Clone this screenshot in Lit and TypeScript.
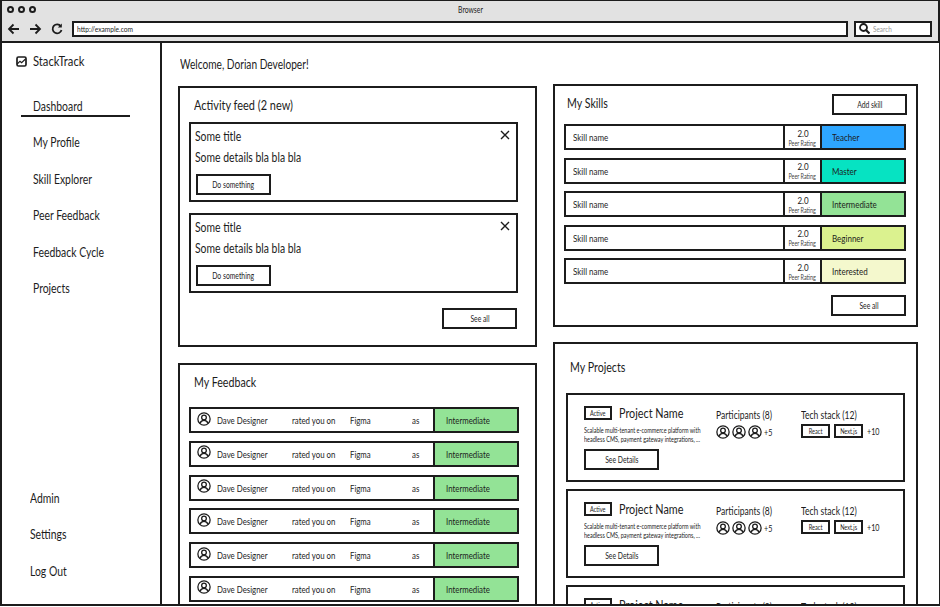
import { LitElement, html, css } from "lit";
import { customElement } from "lit/decorators.js";

const avatar = (s: number) => html`<svg class="ic" width=${s} height=${s} viewBox="0 0 24 24" fill="none" stroke="#1c1c1c" stroke-width="2.2"><circle cx="12" cy="12" r="10.5"/><circle cx="12" cy="9.5" r="4"/><path d="M5 19.5c1.5-3.5 4-5 7-5s5.5 1.5 7 5"/></svg>`;
const close = html`<svg class="ic" width="10" height="10" viewBox="0 0 10 10" stroke="#1c1c1c" stroke-width="1.4" fill="none"><path d="M1 1l8 8M9 1l-8 8"/></svg>`;
const t = (s: string) => html`<span class="sx">${s}</span>`;

const skills = [
  ["Teacher", "#2ea6ff"],
  ["Master", "#06e3c2"],
  ["Intermediate", "#93e396"],
  ["Beginner", "#dbf28f"],
  ["Interested", "#f4f8cd"],
];

@customElement("app-root")
export class AppRoot extends LitElement {
  static styles = css`
    :host { display: block; width: 940px; height: 607px; overflow: hidden; background: #fff; color: #1c1c1c; font-family: Lato, "Liberation Sans", sans-serif; }
    * { box-sizing: border-box; }
    .sx { display: inline-block; transform: scaleX(.8); transform-origin: left center; white-space: nowrap; }
    .btn .sx, .tag .sx, .btitle .sx, .rt .sx { transform-origin: center; }
    .ic { display: block; flex: none; }
    .frame { width: 940px; height: 607px; display: flex; flex-direction: column; overflow: hidden; }
    .chrome { height: 43px; flex: none; background: #e2e2e2; border: 2px solid #1c1c1c; border-top-width: 1px; display: flex; flex-direction: column; }
    .titlebar { height: 17px; flex: none; display: flex; align-items: center; padding-left: 5px; position: relative; }
    .dots { display: flex; gap: 4px; }
    .dot { width: 7px; height: 7px; border: 2px solid #1c1c1c; border-radius: 50%; }
    .btitle { position: absolute; left: 0; right: 0; top: 3px; text-align: center; font-size: 8.5px; line-height: 12px; }
    .controls { display: flex; align-items: center; padding: 2px 6px 0 5px; height: 19px; }
    .navs { display: flex; align-items: center; gap: 9px; width: 65px; }
    .url { width: 777px; height: 16px; background: #fff; border: 2px solid #1c1c1c; font-size: 8.3px; line-height: 12px; padding-left: 3px; }
    .search { margin-left: 6px; width: 78px; height: 16px; background: #fff; border: 2px solid #1c1c1c; display: flex; align-items: center; gap: 3px; padding-left: 3px; font-size: 8px; color: #999; }
    .body { flex: 1; min-height: 0; display: flex; border-bottom: 2px solid #1c1c1c; margin-bottom: 1px; border-left: 2px solid #1c1c1c; border-right: 1px solid #1c1c1c; overflow: hidden; }
    .side { width: 160px; flex: none; border-right: 2px solid #1c1c1c; display: flex; flex-direction: column; justify-content: space-between; padding-bottom: 15px; }
    .logo { display: flex; align-items: center; gap: 6px; padding: 10px 0 0 14px; font-size: 14px; line-height: 16px; }
    .nav { display: flex; flex-direction: column; padding-top: 19px; }
    .nav a { height: 36.4px; padding-left: 31px; font-size: 13px; line-height: 36px; }
    .nav a.on { position: relative; }
    .nav a.on::after { content: ""; position: absolute; left: 19px; width: 109px; bottom: 7px; height: 2px; background: #1c1c1c; }
    .lower a { padding-left: 28px; }
    .main { flex: 1; min-width: 0; padding: 13px 0 0 16px; overflow: hidden; }
    .welcome { font-size: 12.7px; line-height: 16px; padding-left: 2px; height: 30px; }
    .cols { display: flex; gap: 16px; align-items: flex-start; }
    .col { display: flex; flex-direction: column; flex: none; }
    .left { width: 359px; gap: 16px; }
    .right { width: 365px; gap: 15px; margin-top: -2px; }
    .card { border: 2px solid #1c1c1c; }
    h2 { margin: 0; font-weight: 400; font-size: 13.3px; line-height: 16px; }
    .activity { height: 261px; padding: 9px 17px 0 9px; }
    .activity h2 { padding-left: 5px; height: 25px; font-size: 13.7px; }
    .notes { display: flex; flex-direction: column; gap: 11px; }
    .note { height: 80px; border: 2px solid #1c1c1c; padding: 4px 4px 0 4px; position: relative; }
    .note .x { position: absolute; right: 6px; top: 6px; }
    .note .t { font-size: 13px; line-height: 16px; }
    .note .d { font-size: 13px; line-height: 16px; margin-top: 5px; }
    .btn { display: flex; align-items: center; justify-content: center; border: 2px solid #1c1c1c; background: #fff; width: 75px; height: 21px; font-size: 8.5px; }
    .note .btn { margin: 9px 0 0 1px; }
    .end { display: flex; justify-content: flex-end; }
    .activity .end { margin-top: 15px; margin-right: 1px; }
    .feedback { height: 260px; padding: 9px 0 0 9px; }
    .feedback h2 { padding-left: 5px; height: 33px; }
    .frows { display: flex; flex-direction: column; gap: 7.8px; }
    .frow { width: 330px; height: 26px; border: 2px solid #1c1c1c; display: flex; align-items: center; font-size: 9.8px; }
    .frow .av { margin-left: 6px; margin-top: -3px; }
    .frow .who { margin-left: 6px; width: 75px; }
    .frow .verb { width: 58px; }
    .frow .fig { width: 62px; }
    .frow .as { width: 21px; }
    .frow .lvl { flex: 1; align-self: stretch; background: #93e396; border-left: 2px solid #1c1c1c; display: flex; align-items: center; padding-left: 11px; }
    .skills { height: 243px; padding: 8px 10px 0 9px; }
    .shead { display: flex; justify-content: space-between; align-items: flex-start; padding: 0 0 0 3px; height: 30px; margin-right: -1px; }
    .shead h2 { margin-top: 1px; }
    .srows { display: flex; flex-direction: column; gap: 7.6px; }
    .srow { width: 342px; height: 26px; border: 2px solid #1c1c1c; display: flex; align-items: stretch; font-size: 10px; }
    .srow .nm { width: 219px; display: flex; align-items: center; padding-left: 7px; border-right: 2px solid #1c1c1c; }
    .srow .rt { width: 37px; border-right: 2px solid #1c1c1c; display: flex; flex-direction: column; align-items: center; justify-content: center; font-size: 10px; line-height: 11px; }
    .srow .rt small { font-size: 6.8px; line-height: 8px; color: #444; }
    .srow .lv { flex: 1; display: flex; align-items: center; padding-left: 10px; }
    .skills .end { margin-top: 11px; }
    .projects { height: 280px; padding: 15px 0 0 11px; }
    .projects h2 { padding-left: 4px; height: 34px; }
    .plist { display: flex; flex-direction: column; gap: 7px; }
    .proj { width: 339px; height: 89px; border: 2px solid #1c1c1c; padding: 10px 0 0 16px; display: flex; flex: none; }
    .pa { width: 132px; }
    .phead { display: flex; align-items: center; gap: 7px; height: 15px; font-size: 13.5px; }
    .tag { border: 2px solid #1c1c1c; display: flex; align-items: center; justify-content: center; font-size: 7px; height: 14px; flex: none; }
    .desc { font-size: 6.9px; line-height: 9px; margin-top: 6px; width: 126px; white-space: nowrap; }
    .proj .btn { margin-top: 5px; }
    .sec { font-size: 10.7px; line-height: 12px; }
    .pb { width: 85px; padding-top: 4px; }
    .pc { padding-top: 4px; }
    .row { display: flex; align-items: center; margin-top: 4px; font-size: 9px; }
    .pb .row { gap: 2px; }
    .pc .row { gap: 4px; margin-top: 3px; }
  `;

  render() {
    const note = html`<div class="note"><span class="x">${close}</span><div class="t">${t("Some title")}</div><div class="d">${t("Some details bla bla bla")}</div><div class="btn">${t("Do something")}</div></div>`;
    const proj = html`<div class="proj">
      <div class="pa">
        <div class="phead"><span class="tag" style="width:28px">${t("Active")}</span>${t("Project Name")}</div>
        <div class="desc">${t("Scalable multi-tenant e-commerce platform with")}<br />${t("headless CMS, payment gateway integrations, ...")}</div>
        <div class="btn">${t("See Details")}</div>
      </div>
      <div class="pb"><div class="sec">${t("Participants (8)")}</div><div class="row">${avatar(14)}${avatar(14)}${avatar(14)}${t("+5")}</div></div>
      <div class="pc"><div class="sec">${t("Tech stack (12)")}</div><div class="row"><span class="tag" style="width:29px">${t("React")}</span><span class="tag" style="width:29px">${t("Next.js")}</span>${t("+10")}</div></div>
    </div>`;
    return html`<div class="frame">
      <div class="chrome">
        <div class="titlebar"><div class="dots"><i class="dot"></i><i class="dot"></i><i class="dot"></i></div><div class="btitle">${t("Browser")}</div></div>
        <div class="controls">
          <div class="navs">
            <svg class="ic" width="13" height="12" viewBox="0 0 13 12" fill="none" stroke="#1c1c1c" stroke-width="1.8"><path d="M12 6H2M6.5 1.5L2 6l4.5 4.5"/></svg>
            <svg class="ic" width="13" height="12" viewBox="0 0 13 12" fill="none" stroke="#1c1c1c" stroke-width="1.8"><path d="M1 6h10M6.5 1.5L11 6l-4.5 4.5"/></svg>
            <svg class="ic" width="12" height="12" viewBox="0 0 12 12" fill="none" stroke="#1c1c1c" stroke-width="1.8"><path d="M9.8 3.2A4.5 4.5 0 1 0 10.5 7"/><path d="M10.8 .5v4h-4z" fill="#1c1c1c" stroke="none"/></svg>
          </div>
          <div class="url">${t("http://example.com")}</div>
          <div class="search"><svg class="ic" width="11" height="11" viewBox="0 0 11 11" fill="none" stroke="#1c1c1c" stroke-width="1.8"><circle cx="4.5" cy="4.5" r="3.5"/><path d="M7 7l3.5 3.5" stroke-width="2.2"/></svg>${t("Search")}</div>
        </div>
      </div>
      <div class="body">
        <aside class="side">
          <div>
            <div class="logo"><svg class="ic" width="11" height="11" viewBox="0 0 11 11" fill="none" stroke="#1c1c1c" stroke-width="1.7"><rect x="1" y="1" width="9" height="9" rx="1.4"/><path d="M1.2 8l2.8-2.8 1.6 1.4L9.5 3" stroke-width="1.2"/></svg>${t("StackTrack")}</div>
            <nav class="nav">
              <a class="on">${t("Dashboard")}</a><a>${t("My Profile")}</a><a>${t("Skill Explorer")}</a><a>${t("Peer Feedback")}</a><a>${t("Feedback Cycle")}</a><a>${t("Projects")}</a>
            </nav>
          </div>
          <nav class="nav lower"><a>${t("Admin")}</a><a>${t("Settings")}</a><a>${t("Log Out")}</a></nav>
        </aside>
        <main class="main">
          <div class="welcome">${t("Welcome, Dorian Developer!")}</div>
          <div class="cols">
            <div class="col left">
              <section class="card activity">
                <h2>${t("Activity feed (2 new)")}</h2>
                <div class="notes">${note}${note}</div>
                <div class="end"><div class="btn">${t("See all")}</div></div>
              </section>
              <section class="card feedback">
                <h2>${t("My Feedback")}</h2>
                <div class="frows">
                  ${[0, 1, 2, 3, 4, 5].map(() => html`<div class="frow"><span class="av">${avatar(14)}</span><span class="who">${t("Dave Designer")}</span><span class="verb">${t("rated you on")}</span><span class="fig">${t("Figma")}</span><span class="as">${t("as")}</span><span class="lvl">${t("Intermediate")}</span></div>`)}
                </div>
              </section>
            </div>
            <div class="col right">
              <section class="card skills">
                <div class="shead"><h2>${t("My Skills")}</h2><div class="btn">${t("Add skill")}</div></div>
                <div class="srows">
                  ${skills.map(([n, c]) => html`<div class="srow"><span class="nm">${t("Skill name")}</span><span class="rt">${t("2.0")}<small>${t("Peer Rating")}</small></span><span class="lv" style="background:${c}">${t(n)}</span></div>`)}
                </div>
                <div class="end"><div class="btn">${t("See all")}</div></div>
              </section>
              <section class="card projects">
                <h2>${t("My Projects")}</h2>
                <div class="plist">${proj}${proj}${proj}</div>
              </section>
            </div>
          </div>
        </main>
      </div>
    </div>`;
  }
}
